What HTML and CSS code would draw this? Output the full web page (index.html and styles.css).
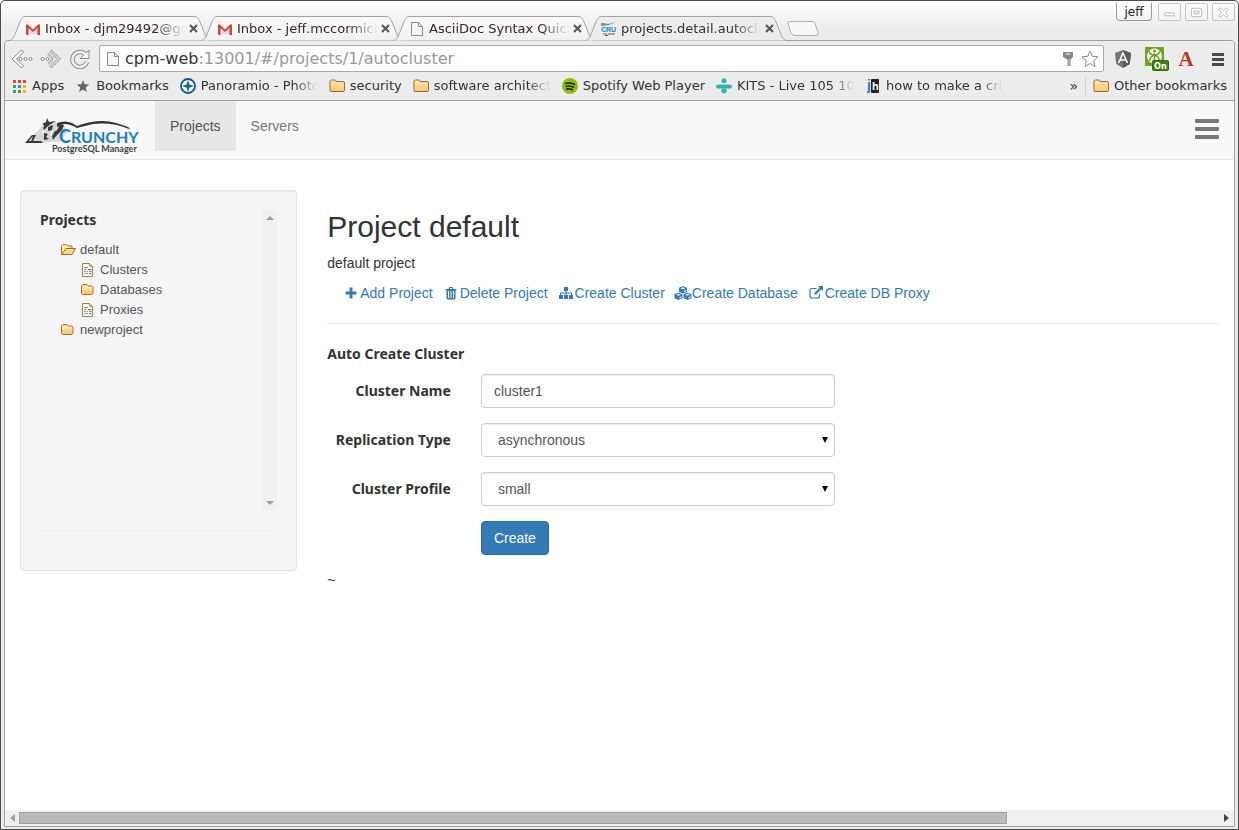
FILE: index.html
```html
<!DOCTYPE html>
<html lang="en">
<head>
<meta charset="utf-8">
<title>projects.detail.autocluster</title>
<link rel="stylesheet" href="styles.css">
</head>
<body>
<svg class="defs" aria-hidden="true">
  <defs>
    <linearGradient id="tabFill" x1="0" y1="0" x2="0" y2="1"><stop offset="0" stop-color="#fafafa"/><stop offset="1" stop-color="#f1f1f1"/></linearGradient>
    <linearGradient id="folderFill" x1="0" y1="0" x2="0" y2="1"><stop offset="0" stop-color="#ffe9bd"/><stop offset="1" stop-color="#fcc46c"/></linearGradient>
    <symbol id="tabShape" viewBox="0 0 204 25"><path d="M1 24.500C5 24 6 21 7.500 17L12 6C13.500 2 15 .500 18 .500H186C189 .500 190.500 2 192 6L196.500 17C198 21 199 24 203 24.500" stroke="#a3a3a3"/></symbol>
    <symbol id="mail" viewBox="0 0 16 16"><path d="M2 4h12v10H2z" fill="#eee"/><path d="M2 13l5-5h2l5 5z" fill="#ddd"/><path d="M1 14V3.500h2l5 5 5-5h2V14h-2.500V7L8 11 3.500 7v7z" fill="#d44638"/></symbol>
    <symbol id="page" viewBox="0 0 14 16"><path d="M1.500 1.500h7l4 4v9h-11z" fill="#f6f6f6" stroke="#8a8a8a"/><path d="M8.500 1.500v4h4" fill="none" stroke="#8a8a8a"/></symbol>
    <symbol id="folder" viewBox="0 0 16 16"><path d="M1 3.500Q1 2 2.500 2H6q1 0 1 1.500h7q1.500 0 1.500 1.500v7.500q0 1-1.500 1H2q-1 0-1-1z" fill="url(#folderFill)" stroke="#9b6b32"/></symbol>
    <symbol id="treeFolder" viewBox="0 0 16 14"><path d="M1.500 3l1.500-1.500h4L8.500 3H12l1 1v6l-1 1.500H2.500l-1-1z" fill="url(#folderFill)" stroke="#ad7323"/><path d="M2.500 5h10" stroke="#fff1cf"/></symbol>
    <symbol id="treeOpen" viewBox="0 0 16 14"><path d="M1.500 10.500V3L3 1.500h3.500L8 3h4v2.500" fill="#ffe8b0" stroke="#b57920"/><path d="M1.500 11.500L6 5.500h9.500L12 11.500z" fill="#ffd991" stroke="#a7681b"/></symbol>
    <symbol id="treeDoc" viewBox="0 0 14 14"><path d="M1.500 .500h7l3 3v10h-10z" fill="#fffff8" stroke="#968346"/><path d="M8.500 .500v3h3" fill="#e4d28c" stroke="#b49d51"/><path d="M3 4.500h4M3 8.500h2M6 8.500h1" stroke="#f25f69"/><path d="M3 6.500h3M3 10.500h4" stroke="#72a6a0"/><path d="M7 6.500h3M8 10.500h2" stroke="#52645f"/><path d="M8 8.500h2" stroke="#348c74"/></symbol>
    <symbol id="close" viewBox="0 0 9 9"><path d="M1 1l7 7M8 1L1 8" stroke="#555" stroke-width="2"/></symbol>
  </defs>
</svg>
<div class="window">
  <header class="titlebar">
    <nav class="tabs" aria-label="Open tabs">
      <div class="tab"><svg class="tab-shape"><use href="#tabShape" fill="url(#tabFill)"/></svg><svg class="icon"><use href="#mail"/></svg><span class="tab-title">Inbox - djm29492@gmail.com</span><button class="tab-close" aria-label="Close tab"><svg><use href="#close"/></svg></button></div>
      <div class="tab"><svg class="tab-shape"><use href="#tabShape" fill="url(#tabFill)"/></svg><svg class="icon"><use href="#mail"/></svg><span class="tab-title">Inbox - jeff.mccormick@cru</span><button class="tab-close" aria-label="Close tab"><svg><use href="#close"/></svg></button></div>
      <div class="tab"><svg class="tab-shape"><use href="#tabShape" fill="url(#tabFill)"/></svg><svg class="icon"><use href="#page"/></svg><span class="tab-title">AsciiDoc Syntax Quick Ref</span><button class="tab-close" aria-label="Close tab"><svg><use href="#close"/></svg></button></div>
      <div class="tab tab-active"><svg class="tab-shape"><use href="#tabShape" fill="#ececec"/></svg><svg class="icon" viewBox="0 0 16 16"><path d="M0 4V2h3l4 1 8-2-7 3-7 1z" fill="#888"/><text x="0" y="11" class="favicon-text">CRU</text><path d="M2 13h4M7 13h7M4 14.500h3" stroke="#555"/></svg><span class="tab-title">projects.detail.autocluster</span><button class="tab-close" aria-label="Close tab"><svg><use href="#close"/></svg></button></div>
      <button class="new-tab" aria-label="New tab"><svg viewBox="0 0 34 17"><path d="M4 1.500h22q2 0 3 2l3 9q1 3-2 3H9q-3 0-4-3L2 4Q1 1.500 4 1.500z" fill="#f8f8f8" stroke="#b0b0b0"/></svg></button>
    </nav>
    <div class="window-controls">
      <button class="user">jeff</button>
      <button class="control" aria-label="Minimize"><svg viewBox="0 0 22 17"><rect x="5.500" y="9.500" width="11" height="3" rx="1.500"/></svg></button>
      <button class="control" aria-label="Maximize"><svg viewBox="0 0 22 17"><rect x="5.500" y="4.500" width="11" height="9" rx="2"/><rect x="8.500" y="7.500" width="5" height="3"/></svg></button>
      <button class="control" aria-label="Close"><svg viewBox="0 0 22 17"><path d="M6 5.500L8 4l3 3 3-3 2 1.500-3 3.500 3 3.500-2 1.500-3-3-3 3-2-1.500L9 9z"/></svg></button>
    </div>
  </header>

  <div class="frame">
    <div class="toolbar">
      <div class="address-row">
        <div class="history">
          <button aria-label="Back"><svg viewBox="0 0 22 20"><path d="M10.500 1L1 10l9.500 9 2-2-7-7 7-7z" fill="#fafafa" stroke="#858585"/><g fill="#fff" stroke="#858585"><circle cx="9.500" cy="10" r="1.500"/><circle cx="14.500" cy="10" r="1.500"/><circle cx="19.500" cy="10" r="1.500"/></g></svg></button>
          <button aria-label="Forward"><svg viewBox="0 0 22 20"><path d="M11.500 1L21 10l-9.500 9-2-2 7-7-7-7z" fill="#ccc" stroke="#858585" stroke-dasharray="1 1"/><path d="M8 5l5 5-5 5" fill="none" stroke="#888" stroke-width="2" stroke-dasharray="1 1"/><g fill="#fff" stroke="#888"><circle cx="2.500" cy="10" r="1.500"/><circle cx="7.500" cy="10" r="1.500"/></g></svg></button>
          <button aria-label="Reload"><svg viewBox="0 0 22 20"><path d="M17 6A7.500 7.500 0 1 0 18 13" fill="none" stroke="#8d8d8d" stroke-width="4.500"/><path d="M11 9.500h9V1z" fill="#f4f4f4" stroke="#8d8d8d"/><path d="M17 6A7.500 7.500 0 1 0 18 13" fill="none" stroke="#f1f1f1" stroke-width="2.500"/></svg></button>
        </div>
        <div class="omnibox">
          <svg class="icon"><use href="#page"/></svg>
          <div class="url" role="textbox" contenteditable="true" spellcheck="false" aria-label="Address">cpm-web<span class="url-path">:13001/#/projects/1/autocluster</span></div>
          <svg class="key" viewBox="0 0 12 16"><path d="M1 1h10v5L8.500 8.500V15h-3V8.500L1 6z" fill="#888"/><path d="M4 3h4" stroke="#fff"/><path d="M7 8v6" stroke="#ccc"/></svg>
          <svg class="star" viewBox="0 0 18 18"><path d="M9 1l2.300 5.300 5.700.500-4.300 3.900 1.300 5.900L9 13.500l-5 3.100 1.300-5.900L1 6.800l5.700-.500z" fill="#fff" stroke="#888"/></svg>
        </div>
        <div class="extensions">
          <button aria-label="AngularJS"><svg viewBox="0 0 18 20"><path d="M9 1l8 3-1.200 11L9 19l-6.800-4L1 4z" fill="#757575"/><path d="M9 1l8 3-1.200 11L9 19z" fill="#5c5c5c"/><path d="M4.500 14L9 4l4.500 10M6.500 11h5" fill="none" stroke="#fff" stroke-width="1.500"/></svg></button>
          <button aria-label="Proxy, on"><svg class="proxy-icon" viewBox="0 0 25 25"><path d="M0 1h19v19H0z" fill="#6aa61e"/><circle cx="9.500" cy="10" r="7.500" fill="#fff"/><path d="M9.500 18V7M4 5q1 4 5.500 4T15 5M4.500 15q1-5 5-6 4 1 5 6" fill="none" stroke="#6aa61e" stroke-width="1.500"/><circle cx="9.500" cy="5" r="1.500" fill="#6aa61e"/><rect x="7.500" y="14.500" width="16" height="10" rx="1" fill="#3f7f18" stroke="#2f6b0d"/><text x="9" y="23" class="badge-text">On</text></svg></button>
          <button class="letter-icon" aria-label="Reader">A</button>
          <button aria-label="Menu"><svg viewBox="0 0 14 16"><path d="M1 3.500h12M1 8.500h12M1 13.500h12" stroke="#4a4a4a" stroke-width="3"/></svg></button>
        </div>
      </div>
      <nav class="bookmarks" aria-label="Bookmarks">
        <a href="#" class="bookmark"><svg class="icon" viewBox="0 0 16 16"><path d="M2 2h3v3H2zM7 2h3v3H7zM12 2h3v3h-3z" fill="#ea4335"/><path d="M2 7h3v3H2zM2 12h3v3H2zM7 12h3v3H7z" fill="#34a15a"/><path d="M7 7h3v3H7z" fill="#1a8cf5"/><path d="M12 7h3v3h-3zM12 12h3v3h-3z" fill="#fbb305"/></svg><span>Apps</span></a>
        <a href="#" class="bookmark"><svg class="icon" viewBox="0 0 16 16"><path d="M8 2l1.600 4.300 4.700.200-3.600 3 1.200 4.500L8 11.400 4.100 14l1.200-4.500-3.600-3 4.700-.200z" fill="#666"/></svg><span>Bookmarks</span></a>
        <a href="#" class="bookmark"><svg class="icon" viewBox="0 0 16 16"><circle cx="8" cy="8" r="7" fill="#fff" stroke="#0a559d" stroke-width="1.800"/><path d="M8 2l1.500 4.500L14 8 9.500 9.500 8 14 6.500 9.500 2 8l4.500-1.500z" fill="#0a62b0"/><path d="M8 5v6M5 8h6" stroke="#0a62b0" stroke-width="2"/></svg><span class="clipped">Panoramio - Photos of the</span></a>
        <a href="#" class="bookmark"><svg class="icon"><use href="#folder"/></svg><span>security</span></a>
        <a href="#" class="bookmark"><svg class="icon"><use href="#folder"/></svg><span class="clipped">software architecture</span></a>
        <a href="#" class="bookmark"><svg class="icon" viewBox="0 0 16 16"><circle cx="8" cy="8" r="8" fill="#94bd0b"/><path d="M3 5.500q5-1.500 10 1M3.500 8.500q4.500-1.500 8.500 1M4 11.200q3.500-1 7 .800" fill="none" stroke="#182400" stroke-width="1.600"/></svg><span>Spotify Web Player</span></a>
        <a href="#" class="bookmark"><svg class="icon" viewBox="0 0 16 16"><circle cx="8" cy="2.700" r="2.500" fill="#35b3aa"/><rect x="0" y="6.500" width="16" height="4" rx="2" fill="#35b3aa"/><path d="M5.500 10.500h5V14q-2.500 3-5 0z" fill="#35b3aa"/></svg><span class="clipped">KITS - Live 105 105.3 FM</span></a>
        <a href="#" class="bookmark"><svg class="icon" viewBox="0 0 16 16"><rect x="6" y="1" width="8" height="14" rx="1" fill="#222"/><text x="2" y="12" class="jh-j">j</text><text x="7" y="12" class="jh-h">h</text></svg><span class="clipped">how to make a crisp ima</span></a>
        <button class="more" aria-label="More bookmarks">»</button>
        <a href="#" class="bookmark other"><svg class="icon"><use href="#folder"/></svg><span>Other bookmarks</span></a>
      </nav>
    </div>

    <div class="app">
      <nav class="navbar">
        <a href="#" class="brand" aria-label="Crunchy PostgreSQL Manager">
          <svg viewBox="0 0 115 38"><path d="M32 5Q40 2 47 5L52 8Q74 0 91 5T104 11Q87 4 68 6L52 10Q42 4 34 7z" fill="#333"/><path d="M0 24.500l6-5 8-8 6-7 2 2 8-2 10 4 2 6-5 6-2 4-7-1-8 1-10-1z" fill="#d6d6d6"/><path d="M0 25l7-8h4l-3 6h8l2 2zM17 6l4-2 1-4 2 4 7-1-5 3-3 2-5 5 1-6zM23 9l5-2-1 5-4 1zM27 18l3-5 4-1-3 6-3 4zM19 15l4 1-2 3 3 2-5 1zM32 5l7 2-2 5-6 6 1-7z" fill="#3a3a3a"/><path d="M4 23l4-5-2 5zM17 13l3-2-2 5zM25 17l2-4v5zM31 10l3-2-2 4z" fill="#fff"/><text x="34" y="25" class="brand-name"><tspan class="brand-initial">C</tspan>RUNCHY</text><text x="27" y="34" class="brand-sub">PostgreSQL Manager</text></svg>
        </a>
        <a href="#" class="nav-link nav-link-active">Projects</a>
        <a href="#" class="nav-link">Servers</a>
        <button class="hamburger" aria-label="Toggle menu"><span></span><span></span><span></span></button>
      </nav>

      <div class="columns">
        <aside class="side">
          <div class="well">
            <div class="tree-pane">
              <div class="tree">
                <strong>Projects</strong>
                <ul>
                  <li><a href="#"><svg><use href="#treeOpen"/></svg>default</a>
                    <ul>
                      <li><a href="#"><svg><use href="#treeDoc"/></svg>Clusters</a></li>
                      <li><a href="#"><svg><use href="#treeFolder"/></svg>Databases</a></li>
                      <li><a href="#"><svg><use href="#treeDoc"/></svg>Proxies</a></li>
                    </ul>
                  </li>
                  <li><a href="#"><svg><use href="#treeFolder"/></svg>newproject</a></li>
                </ul>
              </div>
              <div class="vscroll"><svg viewBox="0 0 8 4"><path d="M0 4l4-4 4 4z" fill="#a0a0a0"/></svg><svg viewBox="0 0 8 4"><path d="M0 0l4 4 4-4z" fill="#a0a0a0"/></svg></div>
            </div>
            <hr>
          </div>
        </aside>

        <main class="main">
          <h2>Project default</h2>
          <p>default project</p>
          <div class="actions">
            <a href="#"><svg viewBox="0 0 18 14"><path d="M7.500 1.500h3v4h4v3h-4v4h-3v-4h-4v-3h4z"/></svg>Add Project</a>
            <a href="#"><svg viewBox="0 0 18 14"><path fill-rule="evenodd" d="M3.500 3h3l1-2h3l1 2h3v1.200h-1V12q0 1.500-1.500 1.500H6Q4.500 13.500 4.500 12V4.200h-1zM7.700 3h2.600l-.500-1H8.200zM6 5v7h1V5zM8.500 5v7h1V5zM11 5v7h1V5z"/></svg>Delete Project</a>
            <a href="#"><svg viewBox="0 0 18 14"><path d="M7 1h4v4H9.500v1.500H15V9h1v4h-4V9h2V7.500H9.500V9H11v4H7V9h1.500V7.500H4V9h2v4H2V9h1V6.500h5.500V5H7z"/></svg>Create Cluster</a>
            <a href="#"><svg viewBox="0 0 18 14"><path d="M9 0l4 1.700v4L9 7.500 5 5.700v-4zM4.500 6.500l4 1.800v4L4.500 14l-4-1.700v-4zM13.500 6.500l4 1.800v4l-4 1.700-4-1.700v-4z"/><path d="M6.600 2.200L9 3.200l2.400-1L9 1.300zM2.100 8.800l2.400 1 2.400-1-2.400-.900zM11.100 8.800l2.400 1 2.400-1-2.400-.900zM10 4.700v1.200l2-1V3.800zM5.500 11.300v1.200l2-1v-1.200zM14.500 11.300v1.200l2-1v-1.200z" fill="#fff"/></svg>Create Database</a>
            <a href="#"><svg viewBox="0 0 18 14"><path d="M9.500 2.500H5q-2 0-2 2V10q0 2 2 2h5.500q2 0 2-2V8" fill="none" stroke="#337ab7" stroke-width="1.200"/><path d="M11 0h5v5l-1.700-1.700-5.600 5.600-1.600-1.600 5.600-5.600z"/></svg>Create DB Proxy</a>
          </div>
          <hr>
          <form onsubmit="return false">
            <strong class="form-title">Auto Create Cluster</strong>
            <div class="field"><label for="name">Cluster Name</label><div class="control-cell"><input id="name" type="text" value="cluster1"></div></div>
            <div class="field"><label for="type">Replication Type</label><div class="control-cell"><select id="type"><option>asynchronous</option><option>synchronous</option></select><svg class="caret" viewBox="0 0 6 6"><path d="M0 0h6L3 6z"/></svg></div></div>
            <div class="field"><label for="profile">Cluster Profile</label><div class="control-cell"><select id="profile"><option>small</option><option>medium</option><option>large</option></select><svg class="caret" viewBox="0 0 6 6"><path d="M0 0h6L3 6z"/></svg></div></div>
            <div class="field"><span class="label-space"></span><div class="control-cell"><button class="primary" type="submit">Create</button></div></div>
          </form>
          <div>~</div>
        </main>
      </div>
    </div>

    <div class="hscroll"><svg viewBox="0 0 5 8"><path d="M5 0v8L0 4z" fill="#a0a0a0"/></svg><div class="track"><div class="thumb"></div></div><svg viewBox="0 0 5 8"><path d="M0 0v8l5-4z" fill="#444"/></svg></div>
  </div>
</div>
</body>
</html>
```

FILE: styles.css
```css
* { box-sizing: border-box; }
body { margin: 0; background: #fff; color: #333; font: 14px/20px "Liberation Sans", Arial, sans-serif; }
button { padding: 0; border: 0; background: none; font: inherit; color: inherit; }
svg { display: block; flex: none; }
a { color: inherit; text-decoration: none; }
strong, label { font-family: "Noto Sans", sans-serif; font-weight: bold; }
.defs { position: absolute; width: 0; height: 0; }

/* Window frame */
.window { display: flex; flex-direction: column; min-height: 100vh; padding: 0 3px 2px; border: 1px solid #4b4b4b; border-radius: 5px 5px 0 0; background: linear-gradient(#fff, #ececec 28px); }
.frame { flex: 1; display: flex; flex-direction: column; border: 1px solid #a0a0a0; border-radius: 4px 4px 0 0; background: #fff; }
.icon { width: 16px; height: 16px; }

/* Title bar and tabs */
.titlebar { display: flex; justify-content: space-between; align-items: flex-start; height: 39px; font: 13px/18px "DejaVu Sans", sans-serif; }
.tabs { display: flex; align-items: center; padding: 15px 0 0 8px; }
.tab { position: relative; display: flex; align-items: center; width: 192px; height: 25px; padding-left: 13px; color: #382424; isolation: isolate; }
.tab-active { color: #333; z-index: 1; }
.tab-shape { position: absolute; left: -4px; top: 0; width: 204px; height: 25px; z-index: -1; }
.tab-title { width: 140px; margin: 0 4px; overflow: hidden; white-space: nowrap; mask-image: linear-gradient(90deg, #000 80%, transparent); }
.tab-close svg { width: 9px; height: 9px; }
.new-tab { margin-left: 6px; }
.new-tab svg { width: 34px; height: 17px; }
.favicon-text { font: bold 7px "Liberation Sans", sans-serif; fill: #1683c4; }
.window-controls { display: flex; gap: 4px; padding: 2px 0 0; }
.user { width: 36px; height: 18px; margin-right: 2px; border: 1px solid #999; border-top: 0; border-radius: 0 0 4px 4px; font-size: 12px; color: #222; }
.control { width: 23px; height: 18px; border: 1px solid #c4c4c4; border-radius: 2px; }
.control svg { width: 21px; height: 16px; fill: #fff; stroke: #b5b5b5; }

/* Toolbar */
.toolbar { padding: 4px 7px 0 6px; border-bottom: 1px solid #a0a0a0; border-radius: 4px 4px 0 0; background: #ececec; color: #333; font: 13px/18px "DejaVu Sans", sans-serif; }
.address-row { display: flex; align-items: center; gap: 8px; }
.history { display: flex; gap: 7px; }
.history svg { width: 22px; height: 20px; }
.omnibox { flex: 1; display: flex; align-items: center; height: 27px; padding: 0 4px 0 5px; border: 1px solid #aaa; border-radius: 2px; background: #fff; }
.url { flex: 1; margin-left: 4px; outline: 0; font-size: 16px; line-height: 20px; white-space: nowrap; }
.url-path { color: #999; }
.key { width: 12px; height: 16px; margin-right: 7px; }
.star { width: 18px; height: 18px; }
.extensions { display: flex; align-items: center; gap: 13px; padding-left: 2px; }
.extensions svg { height: 20px; width: 18px; }
.extensions .proxy-icon { width: 25px; height: 25px; }
.letter-icon { width: 16px; margin-left: -5px; font: bold 21px/20px "Liberation Serif", serif; color: #bd3722; }
.extensions button:last-child svg { width: 14px; height: 16px; }
.extensions button:last-child { margin: 0 2px 0 4px; }
.badge-text { font: bold 9px "DejaVu Sans Condensed", "DejaVu Sans", sans-serif; fill: #fff; }
.bookmarks { display: flex; align-items: center; gap: 11px; height: 28px; white-space: nowrap; }
.bookmark { display: flex; align-items: center; gap: 5px; }
.clipped { width: 117px; overflow: hidden; mask-image: linear-gradient(90deg, #000 80%, transparent); }
.more { margin-left: auto; font-size: 14px; }
.other { padding-left: 7px; margin-left: -4px; border-left: 1px solid #c9d3da; }
.jh-j { font: bold 14px "Liberation Sans", sans-serif; fill: #2776d2; }
.jh-h { font: bold 11px "Liberation Sans", sans-serif; fill: #fff; }

/* Application navbar */
.app { flex: 1; }
.navbar { display: flex; align-items: flex-start; height: 59px; padding: 0 15px; border-bottom: 1px solid #e7e7e7; background: #f8f8f8; }
.brand { padding: 17px 15px 0 5px; }
.brand svg { width: 115px; height: 38px; }
.brand-name { font: bold 16px Lato, sans-serif; fill: #147fc1; }
.brand-initial { font-size: 18px; }
.brand-sub { font: bold 9px Lato, sans-serif; fill: #444; }
.nav-link { padding: 15px; color: #777; }
.nav-link-active { background: #e7e7e7; color: #555; }
.hamburger { display: flex; flex-direction: column; gap: 4px; width: 24px; margin: 18px 0 0 auto; }
.hamburger span { height: 4px; border-radius: 1px; background: #777; }

/* Two-column body */
.columns { display: flex; padding-top: 30px; }
.side { width: 25%; padding: 0 15px; }
.main { width: 75%; padding: 0 15px; }
hr { margin: 20px 0; border: 0; border-top: 1px solid #eee; }
.well { padding: 19px; border: 1px solid #e3e3e3; border-radius: 4px; background: #f5f5f5; box-shadow: inset 0 1px 1px rgba(0, 0, 0, .05); }
.tree-pane { display: flex; height: 300px; }
.tree { flex: 1; }
.tree ul { margin: 0; padding: 0 0 0 20px; list-style: none; font-size: 13px; color: #555; }
.tree > ul { padding-top: 10px; }
.tree a { display: flex; align-items: center; height: 20px; }
.tree svg { width: 16px; height: 14px; margin-right: 4px; }
.vscroll { display: flex; flex-direction: column; justify-content: space-between; align-items: center; width: 15px; padding: 6px 0 5px; background: #f0f0f0; }
.vscroll svg { width: 8px; height: 4px; }

h2 { margin: 20px 0 10px; font-size: 30px; line-height: 33px; font-weight: 500; }
p { margin: 0 0 10px; }
.actions { display: flex; gap: 9px; padding-left: 15px; color: #337ab7; }
.actions a { display: flex; align-items: center; white-space: nowrap; }
.actions svg { width: 18px; height: 14px; fill: #337ab7; }

/* Form */
.form-title { display: block; margin-bottom: 10px; }
.field { display: flex; margin: 0 -15px 15px; }
.field label, .label-space { display: flex; justify-content: flex-end; width: 16.6667%; padding: 7px 15px 0; white-space: nowrap; }
.control-cell { position: relative; width: 41.6667%; padding: 0 15px; }
input, select { display: block; width: 100%; height: 34px; padding: 6px 12px; border: 1px solid #ccc; border-radius: 4px; background: #fff; box-shadow: inset 0 1px 1px rgba(0, 0, 0, .075); color: #555; font: inherit; }
select { padding-left: 16px; appearance: none; }
.caret { position: absolute; right: 22px; top: 14px; width: 6px; height: 6px; pointer-events: none; }
.primary { padding: 6px 12px; border: 1px solid #2e6da4; border-radius: 4px; background: #337ab7; color: #fff; }

/* Horizontal scrollbar */
.hscroll { display: flex; align-items: center; gap: 4px; height: 16px; padding: 0 5px; background: #f0f0f0; }
.hscroll svg { width: 5px; height: 8px; }
.track { flex: 1; }
.thumb { width: 82.3%; height: 12px; border: 1px solid #a0a0a0; background: #bababa; }
```
